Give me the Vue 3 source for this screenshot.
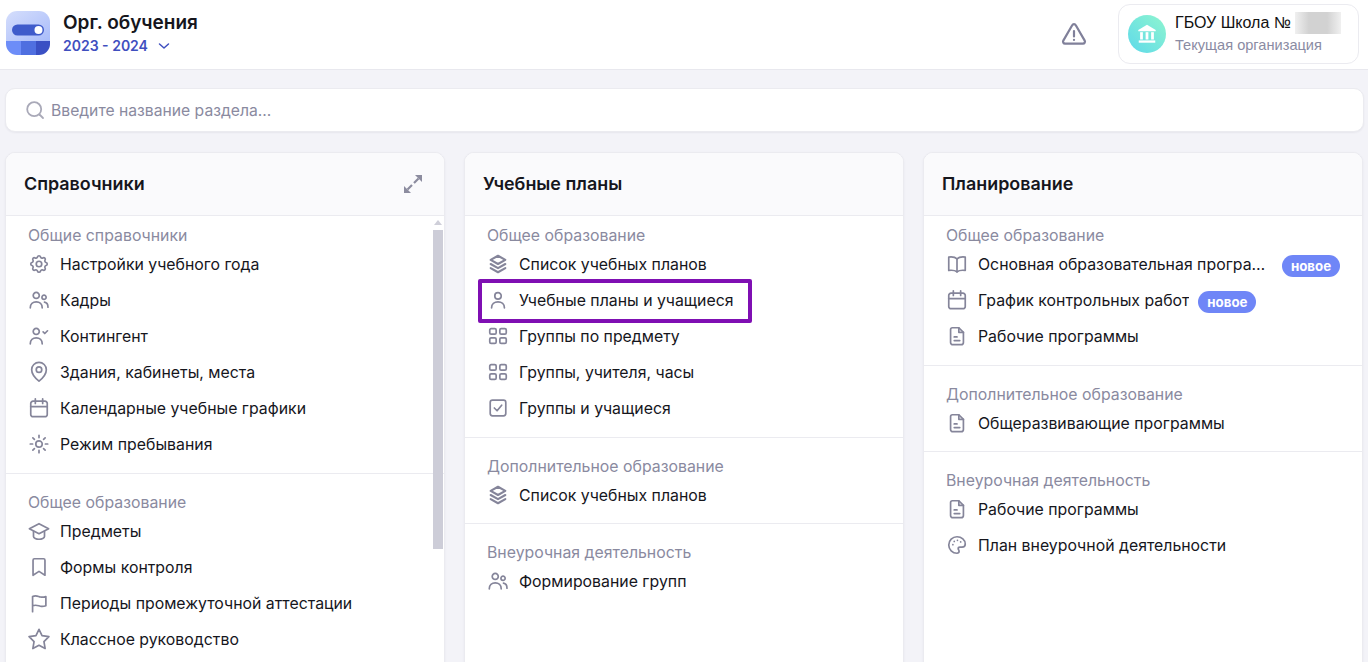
<template>
  <div class="page">
    <header class="topbar">
      <div class="brand">
        <svg class="logo" viewBox="0 0 46 46" width="46" height="46">
          <defs>
            <linearGradient id="logoBg" x1="0" y1="0" x2="1" y2="1">
              <stop offset="0" stop-color="#d5defc" />
              <stop offset="1" stop-color="#a9bcfa" />
            </linearGradient>
          </defs>
          <path d="M12 1h22a11 11 0 0 1 11 11v19H1V12A11 11 0 0 1 12 1z" fill="url(#logoBg)" />
          <path d="M1 31h15v14h-4A11 11 0 0 1 1 34z" fill="#6d8df8" />
          <rect x="16" y="31" width="15" height="14" fill="#4f6fe0" />
          <path d="M31 31h14v3a11 11 0 0 1-11 11h-3z" fill="#3a50c4" />
          <rect x="7" y="14.5" width="32" height="11" rx="5.5" fill="#3f5bcb" />
          <circle cx="33.5" cy="20" r="4" fill="#fff" />
        </svg>
        <div>
          <div class="brand-title">Орг. обучения</div>
          <div class="brand-year">
            2023 - 2024
            <svg viewBox="0 0 12 8" width="12" height="8" fill="none" stroke="currentColor" stroke-width="1.5" stroke-linecap="round" stroke-linejoin="round">
              <path d="M1.5 2l4.5 4 4.5-4" />
            </svg>
          </div>
        </div>
      </div>
      <div class="top-right">
        <svg class="alert" viewBox="0 0 26 24" width="26" height="24" fill="none" stroke="#80809a" stroke-width="2.2" stroke-linecap="round" stroke-linejoin="round">
          <path d="M11.2 3.2 2.3 18.6A2 2 0 0 0 4 21.6h18a2 2 0 0 0 1.7-3L14.8 3.2a2 2 0 0 0-3.6 0z" />
          <path d="M13 9v5.5M13 17.8v.1" />
        </svg>
        <div class="org">
          <div class="org-avatar">
            <svg viewBox="0 0 24 24" width="22" height="22" fill="#fff">
              <path d="M12 2 2.5 7.5V9h19V7.5z" />
              <rect x="4.5" y="10" width="3" height="8" />
              <rect x="10.5" y="10" width="3" height="8" />
              <rect x="16.5" y="10" width="3" height="8" />
              <rect x="3" y="19" width="18" height="2.5" />
            </svg>
          </div>
          <div>
            <div class="org-name">ГБОУ Школа № <span class="blurred"></span></div>
            <div class="org-sub">Текущая организация</div>
          </div>
        </div>
      </div>
    </header>

    <main class="content">
      <div class="search">
        <svg viewBox="0 0 20 20" width="20" height="20" fill="none" stroke="#a9a9b8" stroke-width="1.8" stroke-linecap="round">
          <circle cx="9.2" cy="9.2" r="7" />
          <path d="m14.5 14.5 3.5 3.5" />
        </svg>
        <span>Введите название раздела...</span>
      </div>

      <div class="columns">
        <section v-for="card in cards" :key="card.title" class="card">
          <div class="card-head">
            <h3>{{ card.title }}</h3>
            <svg v-if="card.scroll" viewBox="0 0 20 20" width="20" height="20" fill="#8c8c9f" stroke="none">
              <path d="M12 1h7v7z" />
              <path d="M8 19H1v-7z" />
              <path d="M15.500 4.500 11 9M4.500 15.500 9 11" fill="none" stroke="#8c8c9f" stroke-width="2.200" />
            </svg>
          </div>
          <div class="card-body">
            <div v-for="group in card.groups" :key="group.title" class="group">
              <div class="group-title">{{ group.title }}</div>
              <div v-for="item in group.items" :key="item.text" class="row" :class="{ marked: item.marked, 'has-badge': item.isNew }">
                <svg class="icon" viewBox="0 0 24 24" width="22" height="22" fill="none" stroke="#85859a" :stroke-width="item.icon === 'layers' ? 2.3 : 1.85" stroke-linecap="round" stroke-linejoin="round">
                  <path v-for="d in icons[item.icon]" :key="d" :d="d" />
                </svg>
                <span class="row-text">{{ item.text }}</span>
                <span v-if="item.isNew" class="badge">новое</span>
              </div>
            </div>
            <div v-if="card.scroll" class="scrollbar">
              <i class="arrow"></i>
              <i class="thumb"></i>
            </div>
          </div>
        </section>
      </div>
    </main>
  </div>
</template>

<script setup>
const circle = (x, y, r) => `M${x - r} ${y}a${r} ${r} 0 1 0 ${r * 2} 0a${r} ${r} 0 1 0 ${-r * 2} 0z`;

const doc = ["M7 3h7l5 5v11a2.5 2.5 0 0 1-2.5 2.5h-9A2.5 2.5 0 0 1 5 19V5a2 2 0 0 1 2-2z", "M14 3v5h5", "M9 13h3M9 17h6"];
const layers = ["M12 3 4 7.500 12 12l8-4.500z", "M4 12l8 4.500 8-4.500", "M4 16.500 12 21l8-4.500"];
const grid = ["M4.5 4h4a1.5 1.5 0 0 1 1.5 1.5v3A1.5 1.5 0 0 1 8.5 10h-4A1.5 1.5 0 0 1 3 8.5v-3A1.5 1.5 0 0 1 4.5 4z", "M15.5 4h4A1.5 1.5 0 0 1 21 5.5v3a1.5 1.5 0 0 1-1.5 1.5h-4A1.5 1.5 0 0 1 14 8.5v-3A1.5 1.5 0 0 1 15.5 4z", "M4.5 14h4a1.5 1.5 0 0 1 1.5 1.5v3A1.5 1.5 0 0 1 8.5 20h-4A1.5 1.5 0 0 1 3 18.500v-3A1.5 1.5 0 0 1 4.5 14z", "M15.5 14h4a1.5 1.5 0 0 1 1.5 1.5v3a1.5 1.5 0 0 1-1.5 1.5h-4a1.5 1.5 0 0 1-1.500-1.500v-3a1.5 1.5 0 0 1 1.500-1.500z"];
const calendar = ["M5.5 4.500h13a2.500 2.500 0 0 1 2.500 2.500v12a2.500 2.500 0 0 1-2.500 2.500h-13A2.500 2.500 0 0 1 3 19V7a2.500 2.500 0 0 1 2.500-2.500z", "M3 10.500h18", "M8 2v5M16 2v5"];
const users = [circle(9, 7, 3.3), "M2.500 20.500c0-4 2.800-6.500 6.500-6.500s6.500 2.500 6.500 6.500", circle(17.500, 9, 2.300), "M18 14.300c2.200.4 3.800 2.500 3.800 5.500"];

const icons = {
  gear: [
    "M10.325 4.317c.426-1.756 2.924-1.756 3.35 0a1.724 1.724 0 0 0 2.573 1.066c1.543-.94 3.31.826 2.37 2.37a1.724 1.724 0 0 0 1.065 2.572c1.756.426 1.756 2.924 0 3.35a1.724 1.724 0 0 0-1.066 2.573c.94 1.543-.826 3.31-2.37 2.37a1.724 1.724 0 0 0-2.572 1.065c-.426 1.756-2.924 1.756-3.35 0a1.724 1.724 0 0 0-2.573-1.066c-1.543.94-3.31-.826-2.37-2.37a1.724 1.724 0 0 0-1.065-2.572c-1.756-.426-1.756-2.924 0-3.35a1.724 1.724 0 0 0 1.066-2.573c-.94-1.543.826-3.31 2.37-2.37c1 .608 2.296.07 2.572-1.065z",
    circle(12, 12, 3),
  ],
  users,
  contingent: [circle(9, 7, 3.300), "M2.500 20.500c0-4 2.800-6.500 6.500-6.500s6.500 2.500 6.500 6.500", "M16.500 7.500l1.800 1.800 3-3"],
  pin: ["M12 22s-8-6.500-8-12.500a8 8 0 0 1 16 0C20 15.500 12 22 12 22z", circle(12, 9.500, 3)],
  calendar,
  sun: [circle(12, 12, 3.500), "M12 2.500v2.500M12 19v2.500M2.500 12H5M19 12h2.500M5.300 5.300 7 7M17 17l1.700 1.700M5.300 18.700 7 17M17 7l1.700-1.700"],
  cap: ["M12 4 1.500 9.500 12 15l10.500-5.500z", "M6 12.500V18c0 1.500 3 3 6 3s6-1.500 6-3v-5.500"],
  bookmark: ["M7 3h10a1.500 1.500 0 0 1 1.500 1.500V21L12 16.800 5.500 21V4.500A1.500 1.500 0 0 1 7 3z"],
  flag: ["M5 21.500V5c4-2 6 0 8.500 0.500 2.500.5 4.500 0 6-.5v10c-1.500.5-3.500 1-6 .5S9 13.500 5 15"],
  star: ["M12 1.500l3.300 6.900 7.500 1.100-5.400 5.300 1.300 7.600-6.700-3.600-6.700 3.600 1.300-7.600L1.200 9.500l7.500-1.100z"],
  layers,
  person: [circle(12, 7.500, 3.500), "M5 20.500c0-4 3-6.500 7-6.500s7 2.500 7 6.500"],
  grid,
  check: ["M6 3.500h12A2.500 2.500 0 0 1 20.500 6v12a2.500 2.500 0 0 1-2.500 2.500H6A2.500 2.500 0 0 1 3.500 18V6A2.500 2.500 0 0 1 6 3.500z", "m8 12 3 3 5-6"],
  book: ["M12 6.500C10 4.500 7 4 3 4.500v14.500c4-.5 7 0 9 1.500 2-1.500 5-2 9-1.500V4.500c-4-.5-7 0-9 2z", "M12 6.500v14"],
  doc,
  palette: [
    "M12 3a9 9 0 0 0 0 18c1.500 0 2.300-1 2.300-2.100 0-1.400-1-1.700-1-2.900 0-1 .8-1.700 1.900-1.700h2.300A3.500 3.500 0 0 0 21 10.800C21 6.500 17 3 12 3z",
    "M7.500 11.500v.1M9 8v.1M12.500 6.800v.1M16 8.500v.1",
  ],
};

const cards = [
  {
    title: "Справочники",
    scroll: true,
    groups: [
      {
        title: "Общие справочники",
        items: [
          { icon: "gear", text: "Настройки учебного года" },
          { icon: "users", text: "Кадры" },
          { icon: "contingent", text: "Контингент" },
          { icon: "pin", text: "Здания, кабинеты, места" },
          { icon: "calendar", text: "Календарные учебные графики" },
          { icon: "sun", text: "Режим пребывания" },
        ],
      },
      {
        title: "Общее образование",
        items: [
          { icon: "cap", text: "Предметы" },
          { icon: "bookmark", text: "Формы контроля" },
          { icon: "flag", text: "Периоды промежуточной аттестации" },
          { icon: "star", text: "Классное руководство" },
        ],
      },
    ],
  },
  {
    title: "Учебные планы",
    groups: [
      {
        title: "Общее образование",
        items: [
          { icon: "layers", text: "Список учебных планов" },
          { icon: "person", text: "Учебные планы и учащиеся", marked: true },
          { icon: "grid", text: "Группы по предмету" },
          { icon: "grid", text: "Группы, учителя, часы" },
          { icon: "check", text: "Группы и учащиеся" },
        ],
      },
      {
        title: "Дополнительное образование",
        items: [{ icon: "layers", text: "Список учебных планов" }],
      },
      {
        title: "Внеурочная деятельность",
        items: [{ icon: "users", text: "Формирование групп" }],
      },
    ],
  },
  {
    title: "Планирование",
    groups: [
      {
        title: "Общее образование",
        items: [
          { icon: "book", text: "Основная образовательная программа", isNew: true },
          { icon: "calendar", text: "График контрольных работ", isNew: true },
          { icon: "doc", text: "Рабочие программы" },
        ],
      },
      {
        title: "Дополнительное образование",
        items: [{ icon: "doc", text: "Общеразвивающие программы" }],
      },
      {
        title: "Внеурочная деятельность",
        items: [
          { icon: "doc", text: "Рабочие программы" },
          { icon: "palette", text: "План внеурочной деятельности" },
        ],
      },
    ],
  },
];
</script>

<style scoped>
.page {
  height: 662px;
  overflow: hidden;
  background: #f3f3f8;
  font-family: Inter, "Liberation Sans", sans-serif;
  color: #16161d;
}

.topbar {
  height: 69px;
  background: #fff;
  border-bottom: 1px solid #e8e8ee;
  display: flex;
  align-items: center;
  justify-content: space-between;
  padding: 0 9px 0 5px;
  box-sizing: content-box;
}

.brand {
  display: flex;
  align-items: center;
  gap: 12px;
  padding-bottom: 3px;
}

.brand-title {
  font-size: 19px;
  font-weight: 600;
  line-height: 24px;
}

.brand-year {
  display: flex;
  align-items: center;
  gap: 10px;
  font-size: 14px;
  font-weight: 600;
  line-height: 20px;
  margin-top: 1px;
  color: #3f4fbf;
}

.top-right {
  display: flex;
  align-items: center;
  gap: 31px;
  margin-bottom: 2px;
}

.org {
  width: 241px;
  height: 60px;
  box-sizing: border-box;
  border: 1px solid #ebebf0;
  border-radius: 12px;
  display: flex;
  align-items: center;
  gap: 9px;
  padding-left: 9px;
}

.org-avatar {
  width: 38px;
  height: 38px;
  border-radius: 50%;
  background: linear-gradient(45deg, #5ed9ea, #8ff5cf);
  display: flex;
  align-items: center;
  justify-content: center;
}

.org-name {
  font-family: "Liberation Sans", Arial, sans-serif;
  font-size: 16px;
  line-height: 22px;
  color: #111;
  display: flex;
  align-items: center;
  gap: 4px;
}

.blurred {
  width: 46px;
  height: 22px;
  background: linear-gradient(90deg, #f0f0f0, #d2d2d2 30%, #d2d2d2 70%, #f0f0f0);
}

.org-sub {
  font-family: "Liberation Sans", Arial, sans-serif;
  font-size: 14.6px;
  line-height: 20px;
  margin-top: 1px;
  color: #8a8ba3;
}

.content {
  padding: 18px 4px 0 5px;
}

.search {
  height: 44px;
  box-sizing: border-box;
  background: #fff;
  border: 1px solid #ebebf0;
  border-radius: 10px;
  box-shadow: 0 1px 2px rgba(40, 40, 70, 0.06);
  display: flex;
  align-items: center;
  gap: 6px;
  padding-left: 19px;
  font-size: 15.7px;
  color: #8a8a9f;
}

.columns {
  margin-top: 20px;
  display: grid;
  grid-template-columns: 440px 440px 440px;
  column-gap: 19px;
}

.card {
  height: 560px;
  background: #fff;
  border: 1px solid #ebebf0;
  border-radius: 10px;
  box-sizing: border-box;
  box-shadow: 0 1px 3px rgba(40, 40, 70, 0.05);
  overflow: hidden;
}

.card-head {
  height: 63px;
  box-sizing: border-box;
  background: #fafafc;
  border-bottom: 1px solid #ebebf0;
  display: flex;
  align-items: center;
  justify-content: space-between;
  padding: 0 21px 1px 18px;
}

.card-head h3 {
  margin: 0;
  font-size: 17.9px;
  font-weight: 600;
}

.card-body {
  position: relative;
}

.group {
  padding: 18px 0 10px;
  border-bottom: 1px solid #ebebf0;
}

.group:first-child {
  padding-top: 9px;
  padding-bottom: 11px;
}

.group:last-of-type {
  border-bottom: 0;
}

.group-title {
  font-size: 15.85px;
  line-height: 21px;
  color: #8a8a9f;
  padding-left: 22px;
}

.row {
  position: relative;
  height: 36px;
  display: flex;
  align-items: center;
  padding-left: 22px;
  font-size: 15.85px;
}

.icon {
  flex: none;
  margin-right: 10px;
}

.row-text {
  white-space: nowrap;
}

.has-badge .row-text {
  max-width: 295px;
  overflow: hidden;
  text-overflow: ellipsis;
}

.marked::after {
  content: "";
  position: absolute;
  left: 13px;
  top: -3px;
  width: 274px;
  height: 44px;
  box-sizing: border-box;
  border: 4px solid #7f0fb3;
  border-radius: 2px;
}

.badge {
  margin: 3px 0 0 9px;
  width: 58px;
  height: 22px;
  border-radius: 11px;
  background: #6f86f7;
  color: #fff;
  font-size: 13.3px;
  font-weight: 700;
  line-height: 22px;
  text-align: center;
}

.scrollbar {
  position: absolute;
  right: 0;
  top: 0;
  bottom: 0;
  width: 11px;
}

.arrow {
  position: absolute;
  left: 1px;
  top: 4px;
  border: 4px solid transparent;
  border-top: 0;
  border-bottom: 5px solid #cfcfd9;
}

.thumb {
  position: absolute;
  left: 0;
  top: 14px;
  width: 10px;
  height: 319px;
  background: #cdcdd8;
}
</style>

<style>
html,
body {
  margin: 0;
  overflow: hidden;
}
</style>
